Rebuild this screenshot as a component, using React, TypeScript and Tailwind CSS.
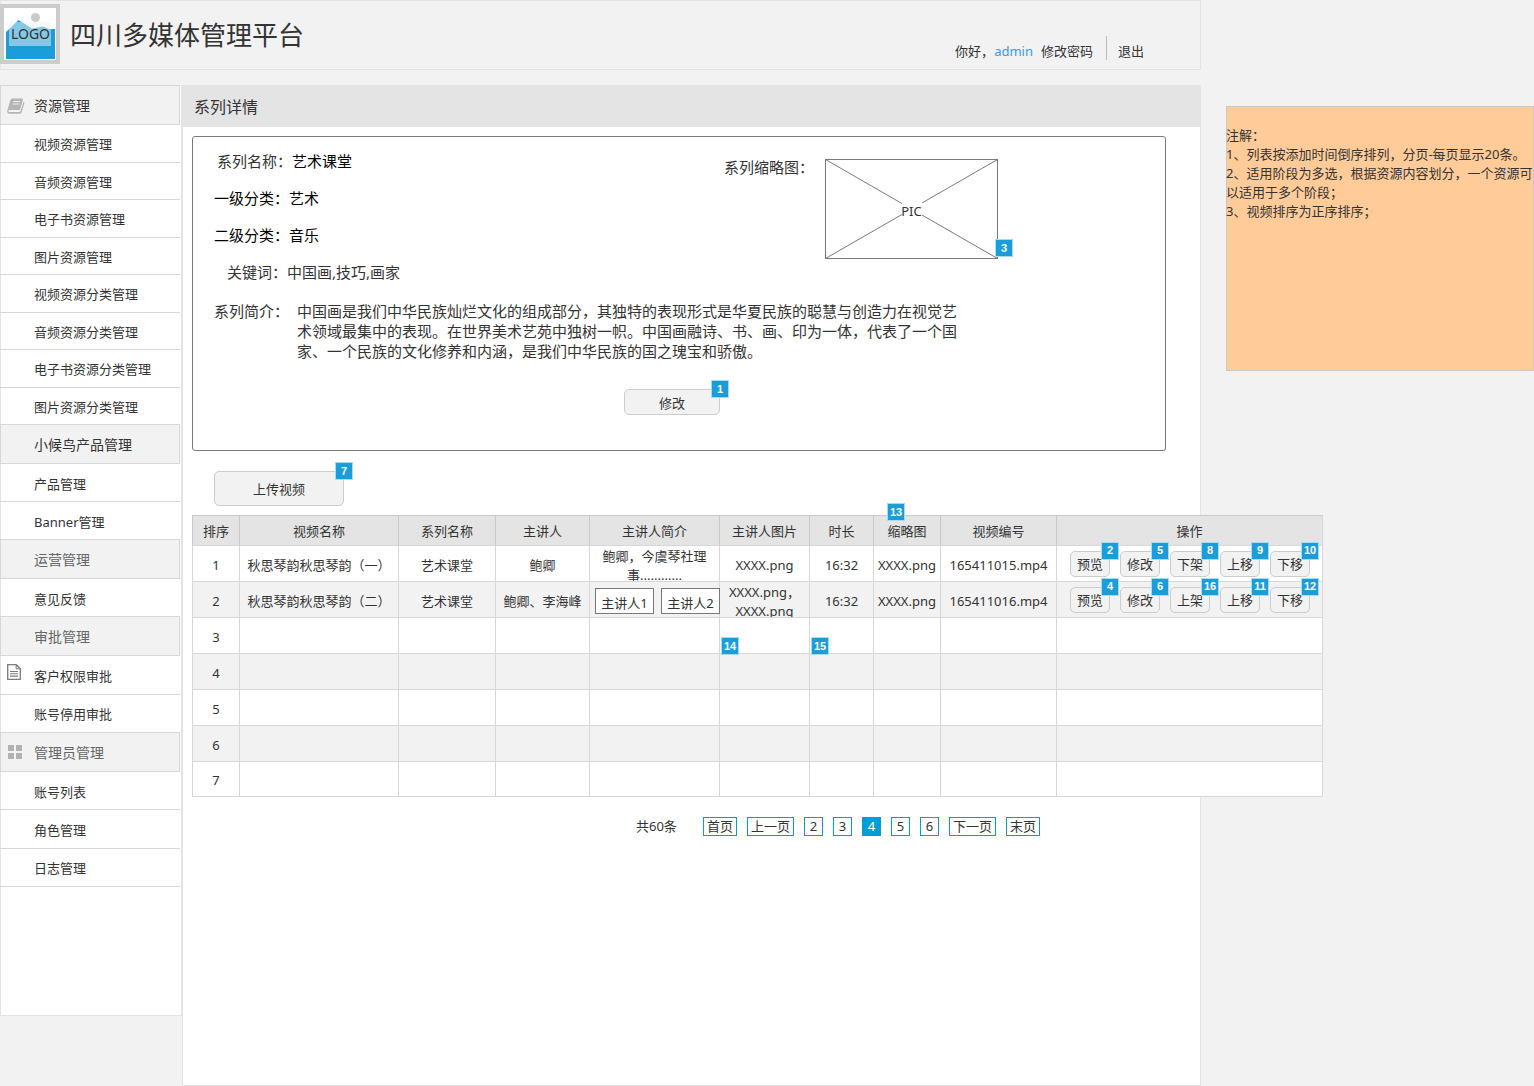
import React from 'react';
import type { ReactNode } from 'react';

interface IMenuGroup {
  title: string;
  icon?: ReactNode;
  titleClass: string;
  listClass: string;
  items: { label: string; icon?: ReactNode }[];
}

interface IAction {
  label: string;
  badge: number;
}

interface IVideo {
  order: number;
  name?: string;
  series?: string;
  speaker?: string;
  intro?: ReactNode;
  speakerImage?: ReactNode;
  duration?: ReactNode;
  thumbnail?: string;
  code?: string;
  actions?: IAction[];
}

const BookIcon = () => (
  <svg width="18" height="16" viewBox="0 0 18 16" aria-hidden="true">
    <path
      d="M5.6.5h9.2q1.500 0 1.100 1.400l-2.700 9q-.4 1.200-1.700 1.200H2.400q-1.200 0-1.100.9.100.9 1.400.9h9.600q.9 0 1.200-.9L16.600 3.700q1.100.6.7 1.900l-2.800 8.800q-.4 1.400-1.900 1.400H2.600Q.3 15.800.1 13.500q0-1 .5-2.100L3.400 2.200Q3.900.5 5.600.5z"
      fill="#b4b4b4"
    />
    <path d="M6.400 3.500h6.700M5.600 6h6.700" stroke="#f2f2f2" strokeWidth="1.100" />
  </svg>
);

const PageIcon = () => (
  <svg width="14" height="16" viewBox="0 0 14 16" fill="none" stroke="#7a7a7a" aria-hidden="true">
    <path d="M.7.7h8.600l4 4v10.600H.7z" strokeWidth="1.300" />
    <path d="M9.200.7v4.100h4.100" strokeWidth="1" />
    <path d="M3 7.500h8M3 9.800h8M3 12.100h8" strokeWidth="1.100" />
  </svg>
);

const GridIcon = () => (
  <svg width="16" height="16" viewBox="0 0 16 16" fill="#b2b2b2" aria-hidden="true">
    <path d="M1 0h6v6H1zM9 0h6v6H9zM1 8h6v6H1zM9 8h6v6H9z" />
  </svg>
);

const menuGroups: IMenuGroup[] = [
  {
    title: '资源管理',
    icon: <BookIcon />,
    titleClass: 'text-[#333333]',
    listClass: 'min-h-[299px]',
    items: [
      { label: '视频资源管理' },
      { label: '音频资源管理' },
      { label: '电子书资源管理' },
      { label: '图片资源管理' },
      { label: '视频资源分类管理' },
      { label: '音频资源分类管理' },
      { label: '电子书资源分类管理' },
      { label: '图片资源分类管理' },
    ],
  },
  {
    title: '小候鸟产品管理',
    titleClass: 'text-[#333333]',
    listClass: 'min-h-[75px]',
    items: [{ label: '产品管理' }, { label: 'Banner管理' }],
  },
  {
    title: '运营管理',
    titleClass: 'text-[#666666]',
    listClass: 'min-h-[37px]',
    items: [{ label: '意见反馈' }],
  },
  {
    title: '审批管理',
    titleClass: 'text-[#666666]',
    listClass: 'min-h-[76px]',
    items: [{ label: '客户权限审批', icon: <PageIcon /> }, { label: '账号停用审批' }],
  },
  {
    title: '管理员管理',
    icon: <GridIcon />,
    titleClass: 'text-[#666666]',
    listClass: 'min-h-[115px] border-b',
    items: [{ label: '账号列表' }, { label: '角色管理' }, { label: '日志管理' }],
  },
];

const columns = [
  { label: '排序', width: 'w-[47px]' },
  { label: '视频名称', width: 'w-[159px]' },
  { label: '系列名称', width: 'w-[97px]' },
  { label: '主讲人', width: 'w-[94px]' },
  { label: '主讲人简介', width: 'w-[130px]' },
  { label: '主讲人图片', width: 'w-[90px]' },
  { label: '时长', width: 'w-[64px]' },
  { label: '缩略图', width: 'w-[67px]', badge: 13 },
  { label: '视频编号', width: 'w-[116px]' },
  { label: '操作', width: 'w-[266px]' },
];

const videos: IVideo[] = [
  {
    order: 1,
    name: '秋思琴韵秋思琴韵（一）',
    series: '艺术课堂',
    speaker: '鲍卿',
    intro: <p className="h-[35px] overflow-hidden px-2 pt-px leading-[19px]">鲍卿，今虞琴社理事............</p>,
    speakerImage: 'XXXX.png',
    duration: '16:32',
    thumbnail: 'XXXX.png',
    code: '165411015.mp4',
    actions: [
      { label: '预览', badge: 2 },
      { label: '修改', badge: 5 },
      { label: '下架', badge: 8 },
      { label: '上移', badge: 9 },
      { label: '下移', badge: 10 },
    ],
  },
  {
    order: 2,
    name: '秋思琴韵秋思琴韵（二）',
    series: '艺术课堂',
    speaker: '鲍卿、李海峰',
    intro: (
      <div className="relative z-10 flex gap-[7px] pt-[3px] pl-[5px]">
        <SpeakerButton label="主讲人1" />
        <SpeakerButton label="主讲人2" />
      </div>
    ),
    speakerImage: <p className="h-[35px] overflow-hidden pt-px leading-[19px]">XXXX.png，XXXX.png</p>,
    duration: '16:32',
    thumbnail: 'XXXX.png',
    code: '165411016.mp4',
    actions: [
      { label: '预览', badge: 4 },
      { label: '修改', badge: 6 },
      { label: '上架', badge: 16 },
      { label: '上移', badge: 11 },
      { label: '下移', badge: 12 },
    ],
  },
  {
    order: 3,
    speakerImage: <Badge value={14} className="-bottom-[2px] left-px" />,
    duration: <Badge value={15} className="-bottom-[2px] left-px" />,
  },
  { order: 4 },
  { order: 5 },
  { order: 6 },
  { order: 7 },
];

const pages = ['首页', '上一页', '2', '3', '4', '5', '6', '下一页', '末页'];

function Badge({ value, className }: { value: number; className: string }) {
  return (
    <span
      className={`absolute z-10 flex size-[18px] items-center justify-center border border-[#a3dcf5] bg-[#1a9dd9] font-['Liberation_Sans',sans-serif] text-[11px] leading-none font-bold text-white ${className}`}
    >
      {value}
    </span>
  );
}

function SpeakerButton({ label }: { label: string }) {
  return (
    <button type="button" className="h-[26px] w-[59px] shrink-0 border border-[#797979] bg-white pt-1 leading-5">
      {label}
    </button>
  );
}

function GrayButton({ label, badge, className }: { label: string; badge: number; className: string }) {
  return (
    <span className="relative inline-flex">
      <button
        type="button"
        className={`rounded-[5px] border border-[#cccccc] bg-[#f2f2f2] pt-px text-[13px] leading-5 ${className}`}
      >
        {label}
      </button>
      <Badge value={badge} className="-top-[9px] -right-[9px]" />
    </span>
  );
}

const Header = () => (
  <header className="flex h-[70px] justify-between border border-[#e4e4e4] pt-[3px] pr-14">
    <div className="flex items-start">
      <svg width="60" height="60" viewBox="0 0 60 60" className="-ml-px" role="img">
        <rect x="2" y="2" width="56" height="56" fill="#fff" stroke="#ccc" strokeWidth="4" />
        <circle cx="35.500" cy="13.500" r="4.500" fill="#c9c9c9" />
        <path d="M6 28L18.500 16 32 24.500l11-2 6 2.500h6v30H6z" fill="#1a9dd9" />
        <rect x="9" y="18" width="42" height="24" fill="#f2f2f2" opacity=".5" />
        <text x="30.500" y="35" fontSize="14" textAnchor="middle" fill="#333">
          LOGO
        </text>
      </svg>
      <h1 className="mt-[13px] ml-[10px] text-[26px] leading-9 text-[#333333]">四川多媒体管理平台</h1>
    </div>
    <div className="flex items-end pb-[9px] leading-[18px]">
      <span>你好，</span>
      <a href="#admin" className="text-[#3399ff]">
        admin
      </a>
      <a href="#password" className="ml-2">
        修改密码
      </a>
      <span className="mr-[11px] ml-[13px] h-6 w-px bg-[#bbbbbb]" />
      <a href="#logout">退出</a>
    </div>
  </header>
);

const Sidebar = () => (
  <nav className="min-h-[931px] w-[182px] shrink-0 self-start border border-t-0 border-[#e4e4e4] bg-white">
    {menuGroups.map((group) => (
      <div key={group.title} className="-ml-px w-[180px]">
        <h2
          className={`flex h-10 items-center border border-[#d7d7d7] bg-[#f2f2f2] pt-px text-sm ${group.titleClass}`}
        >
          <span className="flex w-[33px] pl-[6px]">{group.icon}</span>
          {group.title}
        </h2>
        <ul className={`flex flex-col divide-y divide-[#d7d7d7] border-[#d7d7d7] ${group.listClass}`}>
          {group.items.map((item) => (
            <li key={item.label} className="flex grow basis-0">
              <a href={`#${item.label}`} className="flex flex-1 items-center pt-[3px]">
                <span className="flex w-[34px] pb-2 pl-[7px]">{item.icon}</span>
                {item.label}
              </a>
            </li>
          ))}
        </ul>
      </div>
    ))}
  </nav>
);

const SeriesDetail = () => (
  <section className="mt-[9px] mr-[34px] ml-[9px] rounded-[3px] border border-[#797979] pt-[14px] pr-[35px] pb-[35px] pl-[21px] text-[15px] leading-[21px]">
    <div className="flex">
      <dl className="flex w-[510px] shrink-0 flex-col gap-4">
        <div className="ml-[3px] flex">
          <dt className="w-[75px]">系列名称：</dt>
          <dd className="text-black">艺术课堂</dd>
        </div>
        <div className="flex text-black">
          <dt className="w-[75px]">一级分类：</dt>
          <dd>艺术</dd>
        </div>
        <div className="flex text-black">
          <dt className="w-[75px]">二级分类：</dt>
          <dd>音乐</dd>
        </div>
        <div className="ml-[13px] flex">
          <dt className="w-[60px]">关键词：</dt>
          <dd>中国画,技巧,画家</dd>
        </div>
      </dl>
      <div className="flex gap-[11px] pt-2">
        <span className="leading-[17px]">系列缩略图：</span>
        <div className="relative self-start">
          <svg width="173" height="101" viewBox="0 0 173 101" role="img">
            <rect x=".5" y=".5" width="172" height="99" fill="#fff" stroke="#797979" />
            <path d="M.5.5l172 99M.5 99.500l172-99" stroke="#797979" />
            <rect x="77" y="43" width="20" height="16" fill="#fff" />
            <text x="86.500" y="57" fontSize="13" textAnchor="middle" fill="#333">
              PIC
            </text>
          </svg>
          <Badge value={3} className="-right-[15px] bottom-[3px]" />
        </div>
      </div>
    </div>
    <div className="mt-[18px] flex gap-2 leading-5">
      <span className="w-[75px] shrink-0">系列简介：</span>
      <p className="max-w-[664px]">
        中国画是我们中华民族灿烂文化的组成部分，其独特的表现形式是华夏民族的聪慧与创造力在视觉艺术领域最集中的表现。在世界美术艺苑中独树一帜。中国画融诗、书、画、印为一体，代表了一个国家、一个民族的文化修养和内涵，是我们中华民族的国之瑰宝和骄傲。
      </p>
    </div>
    <div className="mt-7 flex justify-center">
      <GrayButton label="修改" badge={1} className="h-[26px] w-24" />
    </div>
  </section>
);

const VideoTable = () => (
  <table className="relative mt-[9px] ml-[9px] w-[1131px] table-fixed border-separate border-spacing-0 border-r border-b border-[#d7d7d7] text-center">
    <thead>
      <tr>
        {columns.map((col) => (
          <th
            key={col.label}
            className={`relative h-[30px] border-t border-l border-[#c9c9c9] bg-[#e4e4e4] pt-[2px] font-normal ${col.width}`}
          >
            {col.label}
            {col.badge && <Badge value={col.badge} className="-top-[13px] left-[13px]" />}
          </th>
        ))}
      </tr>
    </thead>
    <tbody>
      {videos.map((video) => (
        <tr
          key={video.order}
          className="bg-white even:bg-[#f2f2f2] [&>td]:relative [&>td]:h-9 [&>td]:border-t [&>td]:border-l [&>td]:border-[#d7d7d7] [&>td]:whitespace-nowrap last:[&>td]:h-[35px]"
        >
          <td className="pt-[3px]">{video.order}</td>
          <td className="pt-[3px]">{video.name}</td>
          <td className="pt-[3px]">{video.series}</td>
          <td className="pt-[3px]">{video.speaker}</td>
          <td className="*:whitespace-normal">{video.intro}</td>
          <td className={typeof video.speakerImage === 'string' ? 'pt-[3px]' : '*:whitespace-normal'}>
            {video.speakerImage}
          </td>
          <td className="pt-[3px]">{video.duration}</td>
          <td className="pt-[3px]">{video.thumbnail}</td>
          <td className="pt-[3px]">{video.code}</td>
          <td>
            <div className="flex gap-[10px] pl-[13px]">
              {video.actions?.map((action) => (
                <GrayButton key={action.badge} label={action.label} badge={action.badge} className="h-[26px] w-10" />
              ))}
            </div>
          </td>
        </tr>
      ))}
    </tbody>
  </table>
);

const Pagination = () => (
  <div className="mt-5 ml-[453px] flex items-center gap-[10px]">
    <span className="mr-4">共60条</span>
    {pages.map((page) => (
      <button
        key={page}
        type="button"
        className={`flex h-[19px] min-w-[19px] items-center justify-center border border-[#0a9bd5] px-[3px] ${
          page === '4' ? 'bg-[#009dd9] text-white' : 'bg-white'
        }`}
      >
        {page}
      </button>
    ))}
  </div>
);

const App: React.FC = () => {
  return (
    <div className="flex min-h-screen overflow-x-hidden bg-[#f2f2f2] font-['Noto_Sans','Noto_Sans_CJK_SC',sans-serif] text-[13px] leading-[19px] text-[#333333]">
      <div className="flex min-w-0 flex-1 flex-col">
        <Header />
        <div className="mt-[15px] flex flex-1">
          <Sidebar />
          <main className="min-w-0 flex-1 border border-t-0 border-[#e4e4e4] bg-white">
            <h2 className="h-[42px] bg-[#e4e4e4] pt-[10px] pl-[11px] text-base leading-6">系列详情</h2>
            <SeriesDetail />
            <div className="mt-5 ml-[31px] flex">
              <GrayButton label="上传视频" badge={7} className="h-[35px] w-[130px]" />
            </div>
            <VideoTable />
            <Pagination />
          </main>
        </div>
      </div>
      <aside className="mt-[106px] ml-[25px] min-h-[265px] w-[308px] shrink-0 self-start bg-[#ffcc99] pt-5 ring-1 ring-[#c8c8c8] ring-inset">
        <p>注解：</p>
        <p>1、列表按添加时间倒序排列，分页-每页显示20条。</p>
        <p>2、适用阶段为多选，根据资源内容划分，一个资源可以适用于多个阶段；</p>
        <p>3、视频排序为正序排序；</p>
      </aside>
    </div>
  );
};

export default App;
